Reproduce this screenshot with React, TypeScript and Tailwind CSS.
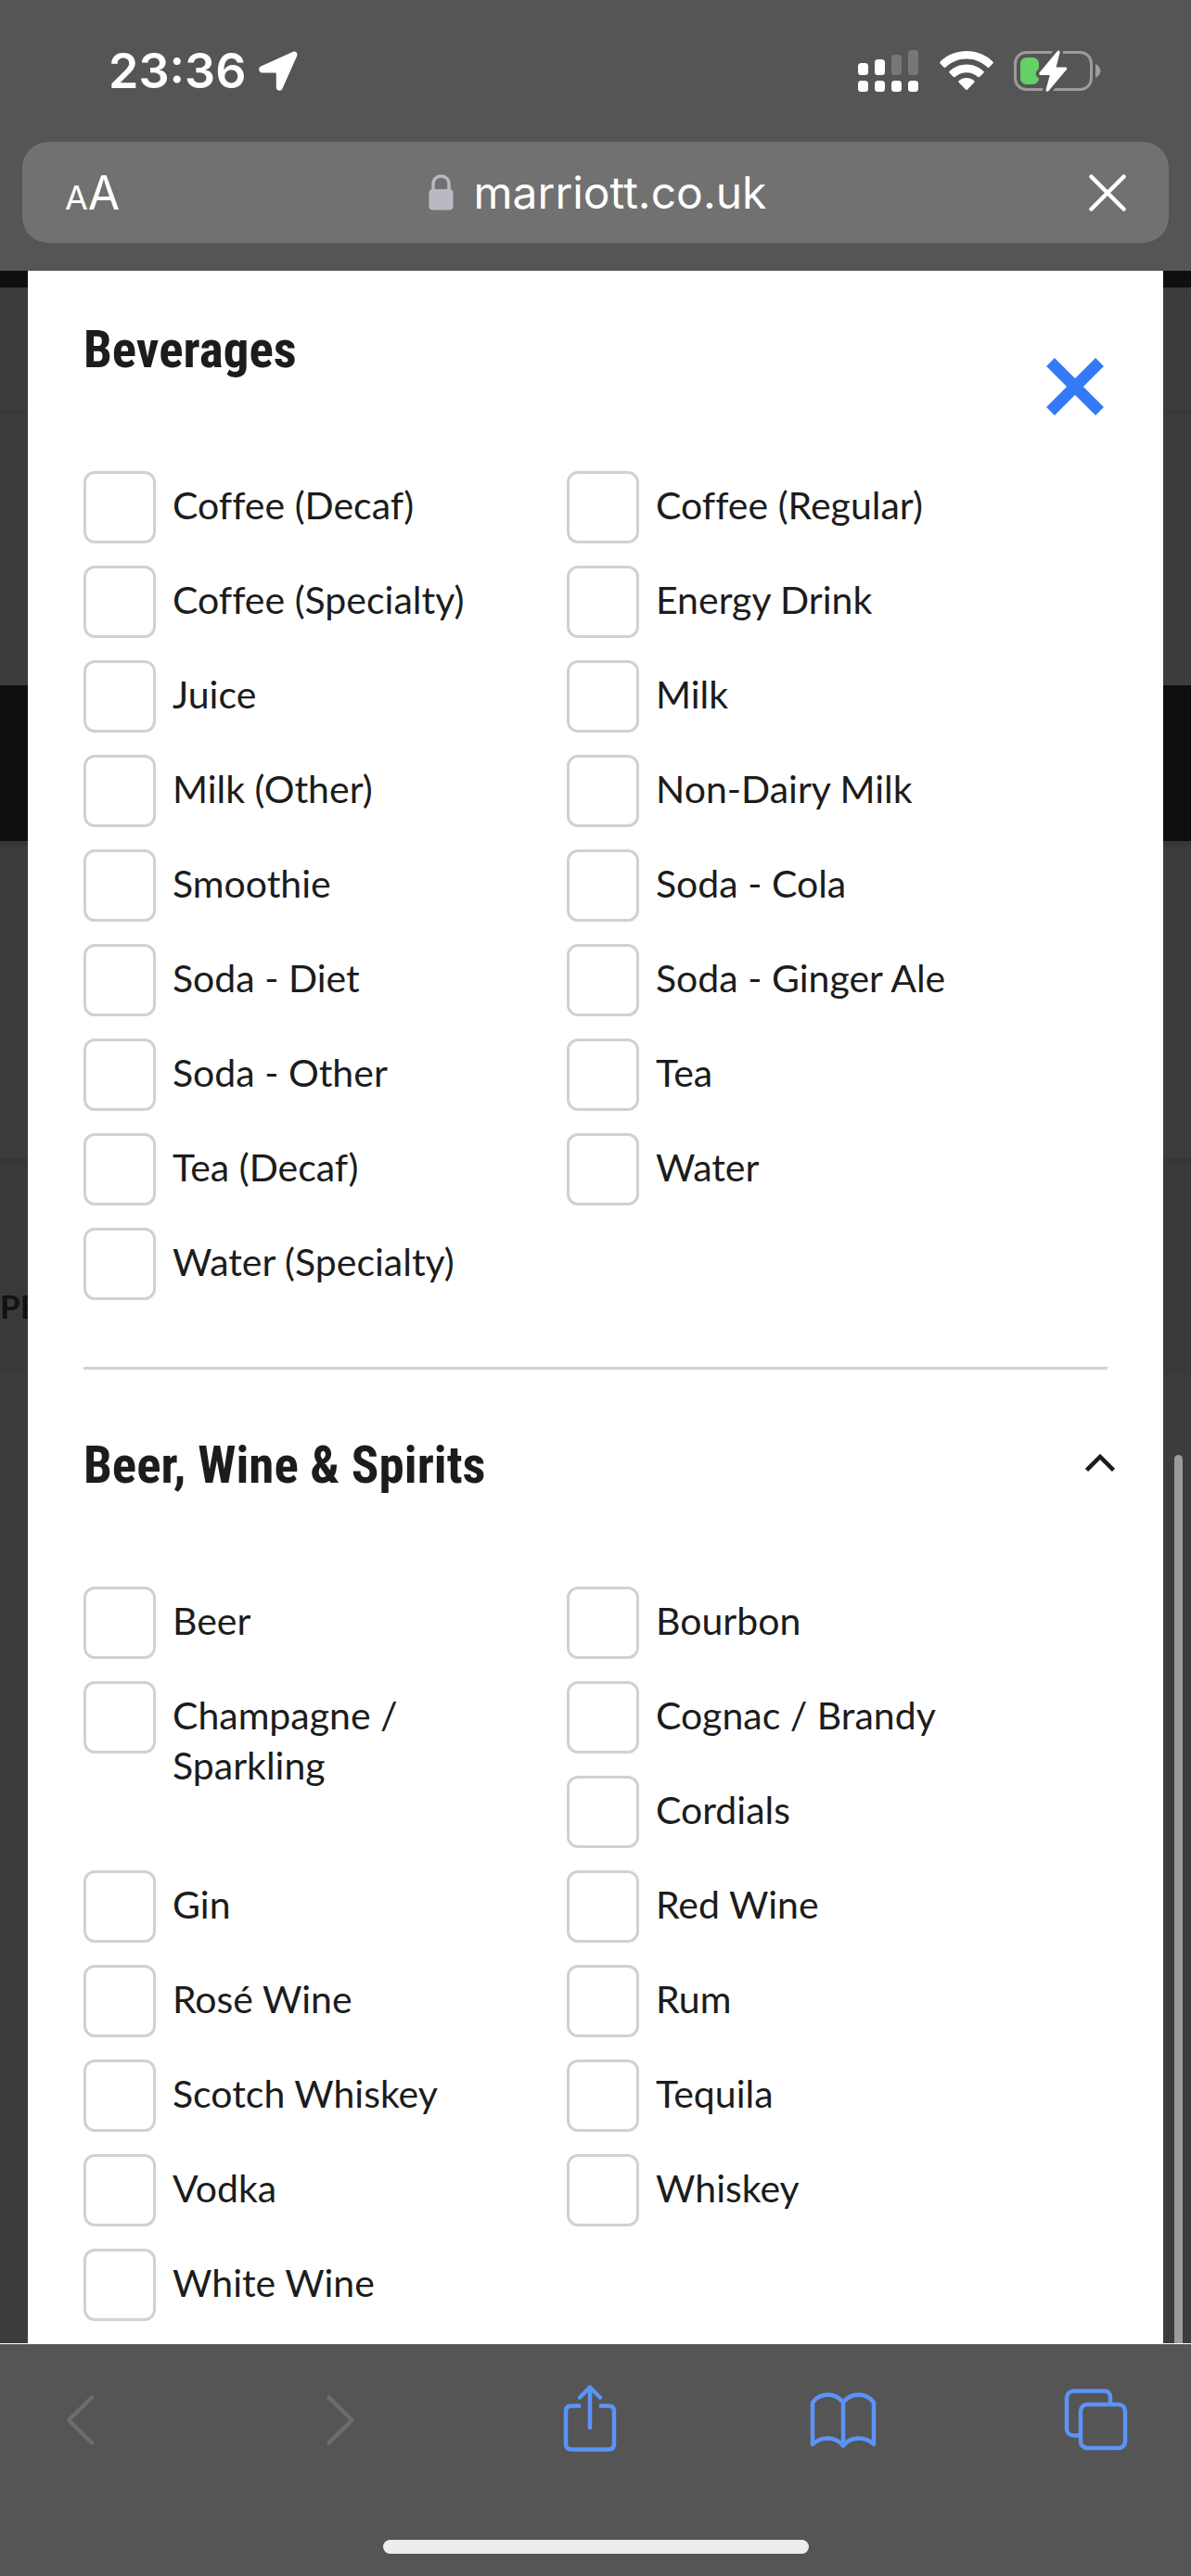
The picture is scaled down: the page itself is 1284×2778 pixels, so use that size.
import type { ReactNode } from 'react'

type Option = {
  name: string
  // labels that wrap take up two rows of the grid
  tall?: boolean
}

const beverages: Option[] = [
  { name: 'Coffee (Decaf)' },
  { name: 'Coffee (Regular)' },
  { name: 'Coffee (Specialty)' },
  { name: 'Energy Drink' },
  { name: 'Juice' },
  { name: 'Milk' },
  { name: 'Milk (Other)' },
  { name: 'Non-Dairy Milk' },
  { name: 'Smoothie' },
  { name: 'Soda - Cola' },
  { name: 'Soda - Diet' },
  { name: 'Soda - Ginger Ale' },
  { name: 'Soda - Other' },
  { name: 'Tea' },
  { name: 'Tea (Decaf)' },
  { name: 'Water' },
  { name: 'Water (Specialty)' },
]

const spirits: Option[] = [
  { name: 'Beer' },
  { name: 'Bourbon' },
  { name: 'Champagne / Sparkling', tall: true },
  { name: 'Cognac / Brandy' },
  { name: 'Cordials' },
  { name: 'Gin' },
  { name: 'Red Wine' },
  { name: 'Rosé Wine' },
  { name: 'Rum' },
  { name: 'Scotch Whiskey' },
  { name: 'Tequila' },
  { name: 'Vodka' },
  { name: 'Whiskey' },
  { name: 'White Wine' },
]

function StatusBar() {
  return (
    <div className="flex h-[153px] items-center justify-between pr-24 pl-[117px]">
      <div className="flex items-center gap-3.5">
        <span className="text-[52px] leading-none font-semibold">23:36</span>
        <svg width="42" height="43" viewBox="0 0 42 43" fill="currentColor" aria-hidden="true">
          <path d="M36 1.2C39.500-.6 42.600 2 41.100 5.600L25.500 40.500C24 44 18.800 43 18.800 39.200V24.600C18.800 23.800 18.400 23.400 17.600 23.400H3.800C0 23.400-1.400 18.200 2.200 16.500Z" />
        </svg>
      </div>

      <div className="flex items-center gap-[22px]">
        {/* dual sim signal */}
        <svg width="66" height="46" viewBox="0 0 66 46" fill="currentColor" aria-hidden="true">
          <rect x="0" y="14" width="11" height="13" rx="3.500" />
          <rect x="18" y="10" width="11" height="17" rx="3.500" />
          <rect x="36" y="5" width="11" height="22" rx="3.500" opacity="0.200" />
          <rect x="54" y="0" width="11" height="27" rx="3.500" opacity="0.200" />
          <rect x="0" y="33" width="11" height="12" rx="3.500" />
          <rect x="18" y="33" width="11" height="12" rx="3.500" />
          <rect x="36" y="33" width="11" height="12" rx="3.500" />
          <rect x="54" y="33" width="11" height="12" rx="3.500" />
        </svg>

        <svg width="58" height="43" viewBox="0 0 58 43" fill="currentColor" aria-hidden="true">
          <path d="M29 0C40 0 50 4.300 57.400 11.400C58 12 58 12.800 57.400 13.400L53.500 17.500C53 18.100 52.100 18.100 51.500 17.500C45.600 12 37.700 8.600 29 8.600S12.400 12 6.500 17.500C5.900 18.100 5 18.100 4.500 17.500L.6 13.400C0 12.800 0 12 .6 11.400C8 4.300 18 0 29 0Z" />
          <path d="M29 14.500C36.100 14.500 42.500 17.300 47.300 21.700C47.900 22.300 47.900 23.200 47.300 23.800L43.300 27.800C42.700 28.400 41.900 28.400 41.300 27.900C38 25 33.700 23.200 29 23.200S20 25 16.700 27.900C16.100 28.400 15.300 28.400 14.700 27.800L10.700 23.800C10.100 23.200 10.100 22.300 10.700 21.700C15.500 17.300 21.900 14.500 29 14.500Z" />
          <path d="M29 28.900C32.200 28.900 35 30 37.200 31.900C37.800 32.400 37.800 33.300 37.200 33.900L30 41.600C29.400 42.200 28.600 42.200 28 41.600L20.800 33.900C20.200 33.300 20.200 32.400 20.800 31.900C23 30 25.800 28.900 29 28.900Z" />
        </svg>

        <svg width="95" height="46" viewBox="0 0 95 46" fill="none" aria-hidden="true">
          <rect x="1.500" y="2.500" width="82" height="40" rx="12" stroke="#9c9c9c" strokeWidth="3" />
          <path d="M88 15C91 16.500 93.500 19 93.500 22.500S91 28.500 88 30Z" fill="#9c9c9c" />
          <rect x="7" y="8" width="20" height="29" rx="6.500" fill="#65cf68" />
          <path
            d="M46.800 1.200C48 -.2 50 .8 49.500 3L45.600 18.500H55.500C57.200 18.500 57.700 19.800 56.800 21L37.500 44C36.200 45.400 34.200 44.400 34.700 42.300L38.800 27H29C27.300 27 26.800 25.500 27.700 24.300Z"
            fill="white"
            stroke="#555555"
            strokeWidth="7"
            paintOrder="stroke"
          />
        </svg>
      </div>
    </div>
  )
}

function AddressBar() {
  return (
    <div className="mx-6 flex h-[109px] items-center justify-between rounded-[28px] bg-[#717171] px-[46px]">
      <button type="button" aria-label="Page settings" className="flex w-[58px] items-baseline leading-none">
        <span className="text-[36px] leading-none">A</span>
        <span className="text-[50px] leading-none">A</span>
      </button>

      <div className="flex items-center gap-[22px]">
        <svg width="27" height="39" viewBox="0 0 27 39" fill="none" aria-hidden="true">
          <path d="M5 18V11C5 5.500 8.500 2 13.500 2S22 5.500 22 11V18" stroke="#bab9c1" strokeWidth="3.500" />
          <rect x="0.500" y="16" width="26" height="22.500" rx="4" fill="#bab9c1" />
        </svg>
        <span className="text-[48px] leading-none">marriott.co.uk</span>
      </div>

      <button type="button" aria-label="Stop loading" className="flex w-[54px] justify-end">
        <svg width="40" height="40" viewBox="0 0 40 40" stroke="currentColor" strokeWidth="4.500" strokeLinecap="round">
          <path d="M2.500 2.500L37.500 37.500M37.500 2.500L2.500 37.500" />
        </svg>
      </button>
    </div>
  )
}

// dimmed page that shows on both sides of the dialog
function Backdrop() {
  return (
    <div className="flex flex-col overflow-hidden bg-[#3c3c3c] [grid-area:1/1]" aria-hidden="true">
      <div className="h-[18px] bg-[#100f0d]" />
      <div className="h-[132px]" />
      <div className="h-[297px] border-t-4 border-[#393939]" />
      <div className="h-[168px] bg-[#100f0d]" />
      <div className="h-[342px] border-t-6 border-[#363636]" />
      <div className="flex h-[233px] items-center border-t-4 border-[#363636] bg-[#393939]">
        <span className="pt-[82px] font-['Lato',sans-serif] text-[35px] leading-none font-bold text-[#121212]">
          PERSONAL
        </span>
      </div>
    </div>
  )
}

function OptionGrid({ id, options }: { id: string; options: Option[] }) {
  return (
    <div className="mr-[62px] grid auto-rows-[78px] grid-cols-2 gap-y-6">
      {options.map((option, i) => (
        <div key={option.name} className={`flex items-start gap-[18px] ${option.tall ? 'row-span-2' : ''}`}>
          <input
            type="checkbox"
            id={`${id}-${i}`}
            className="size-[78px] shrink-0 appearance-none rounded-xl border-3 border-[#d1d1d1] bg-white checked:bg-[#347af6]"
          />
          <label
            htmlFor={`${id}-${i}`}
            className="pt-2.5 pr-12 text-[41px] leading-[54px] [font-variant-ligatures:none]"
          >
            {option.name}
          </label>
        </div>
      ))}
    </div>
  )
}

function Heading({ children }: { children: ReactNode }) {
  return (
    <h2 className="font-['Roboto_Condensed',Roboto,sans-serif] text-[55px] leading-[64px] font-bold">{children}</h2>
  )
}

function PreferencesDialog() {
  return (
    <div
      role="dialog"
      aria-label="Preferences"
      className="mx-[30px] bg-white px-[60px] pb-6 font-['Lato',sans-serif] text-[#1c1c1c] [grid-area:1/1]"
    >
      <section className="border-b-3 border-[#d1d1d1] pb-[72px]">
        <div className="flex h-[216px] items-start justify-between">
          <div className="pt-[53px]">
            <Heading>Beverages</Heading>
          </div>
          <button type="button" aria-label="Close" className="mt-[94px] mr-1">
            <svg width="62" height="62" viewBox="0 0 62 62" stroke="#347af6" strokeWidth="12.500">
              <path d="M4.500 4.500L57.500 57.500M57.500 4.500L4.500 57.500" />
            </svg>
          </button>
        </div>
        <OptionGrid id="beverages" options={beverages} />
      </section>

      <section>
        <div className="flex h-[234px] items-start justify-between pt-[71px]">
          <Heading>Beer, Wine &amp; Spirits</Heading>
          <button type="button" aria-label="Collapse" aria-expanded="true" className="-mr-2 flex h-[60px] items-center">
            <svg width="32" height="20" viewBox="0 0 32 20" fill="none" stroke="currentColor" strokeWidth="4.500">
              <path d="M1.500 17.500L16 3L30.500 17.500" />
            </svg>
          </button>
        </div>
        <OptionGrid id="spirits" options={spirits} />
      </section>
    </div>
  )
}

function ToolButton({ label, disabled, children }: { label: string; disabled?: boolean; children: ReactNode }) {
  return (
    <button type="button" aria-label={label} disabled={disabled} className="text-[#5b94f8] disabled:text-[#6d6d6d]">
      <svg
        width="74"
        height="74"
        viewBox="0 0 74 74"
        fill="none"
        stroke="currentColor"
        strokeWidth="4.500"
        strokeLinecap="round"
        strokeLinejoin="round"
      >
        {children}
      </svg>
    </button>
  )
}

function ToolBar() {
  return (
    <nav className="flex flex-col items-center border-t border-white bg-[#555555] pt-[43px] pb-6">
      <div className="flex w-full justify-between pr-[65px] pl-[53px]">
        <ToolButton label="Back" disabled>
          <path d="M46 14.500L21 39L46 63.500" />
        </ToolButton>
        <ToolButton label="Forward" disabled>
          <path d="M28.500 14.500L53.500 39L28.500 63.500" />
        </ToolButton>
        <ToolButton label="Share">
          <path
            d="M27 23.500H17C13 23.500 11 25.500 11 29.500V64.500C11 68.500 13 70.500 17 70.500H57C61 70.500 63 68.500 63 64.500V29.500C63 25.500 61 23.500 57 23.500H47"
            strokeLinecap="butt"
          />
          <path d="M37 47V4M26 14.500L37 3.500L48 14.500" />
        </ToolButton>
        <ToolButton label="Bookmarks">
          <path d="M37 20C33 14.500 27 11.500 20.500 11.500S8 14.500 4 20V65C8 61 14 58.500 20.500 58.500S33 61.500 37 66.500C41 61.500 47 58.500 53.500 58.500S66 61 70 65V20C66 14.500 60 11.500 53.500 11.500S41 14.500 37 20ZM37 20V66" />
        </ToolButton>
        <ToolButton label="Tabs">
          <rect x="20" y="22" width="48" height="47" rx="7" />
          <path d="M20 55.500H13C8 55.500 5 52.500 5 48V15C5 10.500 8 7.500 13 7.500H45C50 7.500 52 10.500 52 15V21" />
        </ToolButton>
      </div>
      <div className="mt-[94px] h-[15px] w-[459px] rounded-full bg-[#ededed]" />
    </nav>
  )
}

export default function App() {
  return (
    <div className="flex min-h-screen flex-col bg-[#555555] font-['Inter',sans-serif] text-white">
      <header className="bg-[#555555] pb-[30px]">
        <StatusBar />
        <AddressBar />
      </header>

      <main className="relative grid grow grid-cols-1">
        <Backdrop />
        <PreferencesDialog />
        {/* scroll thumb */}
        <div className="absolute right-[9px] bottom-0 h-[958px] w-[9px] rounded-t-full bg-[#9b9b9b]" />
      </main>

      <ToolBar />
    </div>
  )
}
